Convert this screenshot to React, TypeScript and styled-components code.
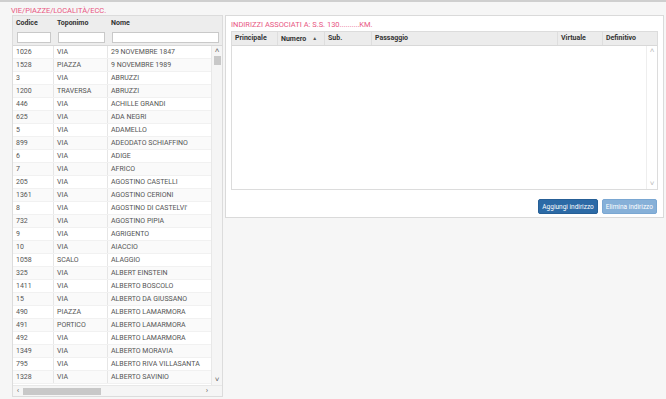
import styled, { createGlobalStyle } from "styled-components";

const GlobalStyle = createGlobalStyle`
  html, body {
    margin: 0;
    padding: 0;
    background: #f6f6f6;
    font-family: Roboto, "Liberation Sans", sans-serif;
    color: #555;
  }
`;

type Street = [string, string, string];

const streets: Street[] = [
  ["1026", "VIA", "29 NOVEMBRE 1847"],
  ["1528", "PIAZZA", "9 NOVEMBRE 1989"],
  ["3", "VIA", "ABRUZZI"],
  ["1200", "TRAVERSA", "ABRUZZI"],
  ["446", "VIA", "ACHILLE GRANDI"],
  ["625", "VIA", "ADA NEGRI"],
  ["5", "VIA", "ADAMELLO"],
  ["899", "VIA", "ADEODATO SCHIAFFINO"],
  ["6", "VIA", "ADIGE"],
  ["7", "VIA", "AFRICO"],
  ["205", "VIA", "AGOSTINO CASTELLI"],
  ["1361", "VIA", "AGOSTINO CERIONI"],
  ["8", "VIA", "AGOSTINO DI CASTELVI'"],
  ["732", "VIA", "AGOSTINO PIPIA"],
  ["9", "VIA", "AGRIGENTO"],
  ["10", "VIA", "AIACCIO"],
  ["1058", "SCALO", "ALAGGIO"],
  ["325", "VIA", "ALBERT EINSTEIN"],
  ["1411", "VIA", "ALBERTO BOSCOLO"],
  ["15", "VIA", "ALBERTO DA GIUSSANO"],
  ["490", "PIAZZA", "ALBERTO LAMARMORA"],
  ["491", "PORTICO", "ALBERTO LAMARMORA"],
  ["492", "VIA", "ALBERTO LAMARMORA"],
  ["1349", "VIA", "ALBERTO MORAVIA"],
  ["795", "VIA", "ALBERTO RIVA VILLASANTA"],
  ["1328", "VIA", "ALBERTO SAVINIO"],
];

const leftCols = [41, 54, 140];
const rightCols = [46, 47, 47, 186, 45, 55];
const rightHeads = ["Principale", "Numero", "Sub.", "Passaggio", "Virtuale", "Definitivo"];

const App = () => {
  return (
    <>
      <GlobalStyle />
      <Page>
        {/* strade */}
        <LeftPane>
          <Title>VIE/PIAZZE/LOCALITÀ/ECC.</Title>
          <StreetGrid>
            <GridHead>
              <HeadRow>
                {["Codice", "Toponimo", "Nome"].map((h, i) => (
                  <HeadCell key={h} $w={leftCols[i]} $grow={i === 2}>
                    {h}
                  </HeadCell>
                ))}
              </HeadRow>
              <FilterRow>
                {leftCols.map((w, i) => (
                  <FilterCell key={i} $w={w} $grow={i === 2}>
                    <FilterInput />
                  </FilterCell>
                ))}
              </FilterRow>
            </GridHead>
            <GridBody>
              <Rows>
                {streets.map((s, r) => (
                  <Row key={r}>
                    {s.map((v, i) => (
                      <Cell key={i} $w={leftCols[i]}>
                        {v}
                      </Cell>
                    ))}
                  </Row>
                ))}
              </Rows>
              <VScroll>
                <Arrow>˄</Arrow>
                <VTrack>
                  <VThumb />
                </VTrack>
                <Arrow>˅</Arrow>
              </VScroll>
            </GridBody>
            <HScrollRow>
              <HScroll>
                <Arrow>‹</Arrow>
                <HTrack>
                  <HThumb />
                </HTrack>
                <Arrow>›</Arrow>
              </HScroll>
              <Corner />
            </HScrollRow>
          </StreetGrid>
        </LeftPane>

        {/* indirizzi */}
        <Panel>
          <PanelTitle>INDIRIZZI ASSOCIATI A: S.S. 130..........KM.</PanelTitle>
          <AddressGrid>
            <AddrHead>
              {rightHeads.map((h, i) => (
                <AddrHeadCell key={h} $w={rightCols[i]}>
                  {h}
                  {h === "Numero" && <SortArrow>▲</SortArrow>}
                </AddrHeadCell>
              ))}
            </AddrHead>
            <AddrBody>
              <AddrEmpty />
              <VScroll $light>
                <Arrow $light>˄</Arrow>
                <VTrack />
                <Arrow $light>˅</Arrow>
              </VScroll>
            </AddrBody>
          </AddressGrid>
          <ButtonBar>
            <Button>Aggiungi indirizzo</Button>
            <Button $disabled>Elimina indirizzo</Button>
          </ButtonBar>
        </Panel>
      </Page>
    </>
  );
};

export default App;

const Page = styled.div`
  width: 666px;
  height: 399px;
  box-sizing: border-box;
  border-top: 2px solid #cfcfcf;
  display: flex;
  align-items: flex-start;
  overflow: hidden;
`;

const LeftPane = styled.div`
  width: 225px;
  padding: 4px 0 0 11px;
  box-sizing: border-box;
`;

const Title = styled.div`
  color: #e8557f;
  font-size: 7.5px;
  line-height: 9px;
  height: 9px;
`;

const StreetGrid = styled.div`
  width: 211px;
  margin-left: 1px;
  border: 1px solid #dcdcdc;
  background: #fff;
  box-sizing: border-box;
`;

const GridHead = styled.div`
  background: #ededed;
  border-bottom: 1px solid #d8d8d8;
`;

const HeadRow = styled.div`
  display: flex;
  height: 13px;
  align-items: center;
`;

const HeadCell = styled.div<{ $w: number; $grow?: boolean }>`
  width: ${(p) => p.$w}px;
  flex: ${(p) => (p.$grow ? "1" : "none")};
  padding-left: 3px;
  box-sizing: border-box;
  font-size: 7px;
  font-weight: 700;
  color: #333;
`;

const FilterRow = styled.div`
  display: flex;
  height: 16px;
  align-items: center;
`;

const FilterCell = styled.div<{ $w: number; $grow?: boolean }>`
  width: ${(p) => p.$w}px;
  flex: ${(p) => (p.$grow ? "1" : "none")};
  padding: 0 3px 0 4px;
  box-sizing: border-box;
`;

const FilterInput = styled.div`
  height: 9px;
  background: #fff;
  border: 1px solid #c9c9c9;
`;

const GridBody = styled.div`
  display: flex;
  height: 339px;
  overflow: hidden;
`;

const Rows = styled.div`
  flex: 1;
  overflow: hidden;
`;

const Row = styled.div`
  display: flex;
  height: 13px;
  align-items: center;
  white-space: nowrap;
  border-bottom: 1px solid #f1f1f1;
  box-sizing: border-box;
  &:nth-child(even) {
    background: #fafafa;
  }
`;

const Cell = styled.div<{ $w: number }>`
  width: ${(p) => p.$w}px;
  flex: none;
  height: 100%;
  line-height: 13px;
  padding-left: 3px;
  box-sizing: border-box;
  font-size: 7px;
  color: #555;
  border-right: 1px solid #e6e6e6;
`;

const VScroll = styled.div<{ $light?: boolean }>`
  width: 10px;
  flex: none;
  display: flex;
  flex-direction: column;
  align-items: center;
  background: ${(p) => (p.$light ? "#fff" : "#f5f5f5")};
  border-left: 1px solid ${(p) => (p.$light ? "#eee" : "#e8e8e8")};
`;

const Arrow = styled.div<{ $light?: boolean }>`
  height: 10px;
  line-height: 10px;
  font-size: 8px;
  color: ${(p) => (p.$light ? "#bbb" : "#666")};
  text-align: center;
  width: 10px;
`;

const VTrack = styled.div`
  flex: 1;
  width: 100%;
  display: flex;
  justify-content: center;
`;

const VThumb = styled.div`
  width: 7px;
  height: 9px;
  background: #c8c8c8;
`;

const HScrollRow = styled.div`
  display: flex;
  height: 10px;
  border-top: 1px solid #e8e8e8;
`;

const HScroll = styled.div`
  flex: 1;
  display: flex;
  align-items: center;
  background: #f5f5f5;
`;

const HTrack = styled.div`
  flex: 1;
  height: 100%;
  display: flex;
  align-items: center;
`;

const HThumb = styled.div`
  width: 78px;
  height: 7px;
  background: #c8c8c8;
`;

const Corner = styled.div`
  width: 10px;
  background: #f5f5f5;
`;

const Panel = styled.div`
  margin-top: 13px;
  width: 439px;
  height: 203px;
  box-sizing: border-box;
  background: #fff;
  border: 1px solid #dadada;
  padding: 4px 6px 0 5px;
  display: flex;
  flex-direction: column;
`;

const PanelTitle = styled.div`
  color: #e8557f;
  font-size: 7.5px;
  line-height: 10px;
  height: 11px;
`;

const AddressGrid = styled.div`
  border: 1px solid #dcdcdc;
  width: 427px;
  box-sizing: border-box;
`;

const AddrHead = styled.div`
  display: flex;
  height: 13px;
  background: #ececec;
  border-bottom: 1px solid #d8d8d8;
`;

const AddrHeadCell = styled.div<{ $w: number }>`
  width: ${(p) => p.$w}px;
  flex: none;
  line-height: 13px;
  padding-left: 3px;
  box-sizing: border-box;
  font-size: 7px;
  font-weight: 700;
  color: #333;
  border-right: 1px solid #dedede;
  &:last-child {
    border-right: none;
  }
`;

const SortArrow = styled.span`
  font-size: 5px;
  margin-left: 6px;
  color: #555;
  vertical-align: 1px;
`;

const AddrBody = styled.div`
  display: flex;
  height: 143px;
`;

const AddrEmpty = styled.div`
  flex: 1;
`;

const ButtonBar = styled.div`
  display: flex;
  justify-content: flex-end;
  gap: 4px;
  margin-top: 9px;
`;

const Button = styled.div<{ $disabled?: boolean }>`
  height: 15px;
  line-height: 15px;
  padding: 0 3px;
  font-size: 6.5px;
  color: #fff;
  background: ${(p) => (p.$disabled ? "#86b0d8" : "#2c6aa6")};
  border: 1px solid ${(p) => (p.$disabled ? "#7aa7d2" : "#265f96")};
  border-radius: 2px;
  box-sizing: border-box;
`;
